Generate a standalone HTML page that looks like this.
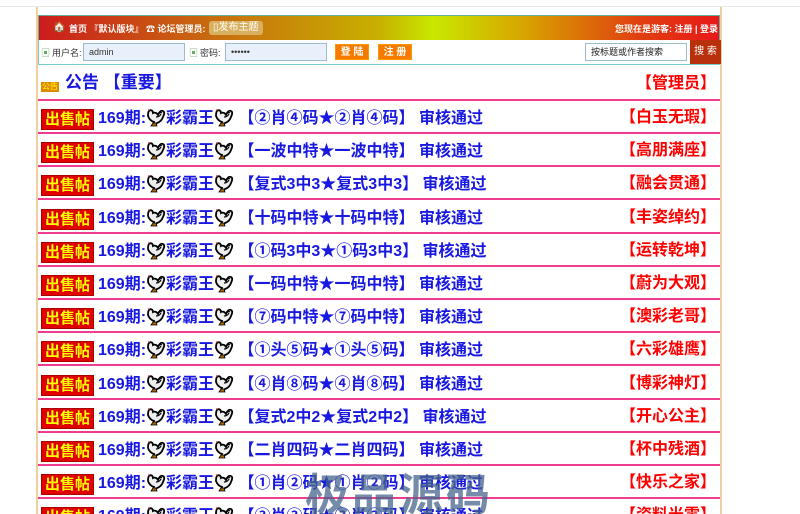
<!DOCTYPE html>
<html style="width:800px;height:514px;overflow:hidden"><head><meta charset="utf-8"><style>
*{margin:0;padding:0;box-sizing:border-box}
body{width:800px;height:514px;overflow:hidden;background:#fff;font-family:"Liberation Sans","Noto Sans CJK SC",sans-serif;position:relative}
.topline{position:absolute;left:0;top:6px;width:800px;height:1px;background:#e8e8e8}
.wrap{position:absolute;left:36px;top:7px;width:686px;height:507px;border-left:2px solid #f2cfa0;border-right:2px solid #f2cfa0}
.bar{position:absolute;left:38px;top:15px;width:682px;height:25px;background:linear-gradient(90deg,#cc1c1c 0%,#c86a10 25%,#c8b000 50%,#c8e800 58%,#d8a000 72%,#e04010 88%,#e81818 100%);border:1px solid #6a9;border-bottom:none;color:#fff;font-size:9px;font-weight:bold;line-height:12px}
.bar span{position:absolute;white-space:nowrap}
.login{position:absolute;left:38px;top:40px;width:682px;height:25px;border:1px solid #7cc;border-top:none;font-size:9px;color:#333;line-height:12px}
.login span{position:absolute;white-space:nowrap}
.inp{position:absolute;height:18px;border:1px solid #9bc;background:#e8f0fc;font-size:9px;padding:0 5px;top:3px;line-height:16px}
.btn{position:absolute;top:4px;height:16px;background:#f77a00;color:#fff;font-size:10px;font-weight:bold;text-align:center;line-height:15px;border:1px solid #f90}
.row{position:absolute;left:38px;width:682px;height:33px;border-bottom:2px solid #f03c90}
.badge{position:absolute;left:3px;top:8px;width:53px;height:21px;background:#e00000;border:1px solid #a00;color:#ff0;font-size:15px;font-weight:bold;text-align:center;line-height:20px}
.t{position:absolute;left:60px;top:6px;font-size:16px;font-weight:bold;color:#1818e0;white-space:nowrap;line-height:20px}
.u{position:absolute;right:4px;top:7px;font-size:16px;font-weight:bold;color:#f00;line-height:20px}
.r{display:inline-block;width:20px;height:20px;vertical-align:-4px}
.wm{position:absolute;left:305px;top:466px;font-size:44px;line-height:50px;font-weight:bold;color:rgba(70,100,140,0.75);letter-spacing:3px;font-family:"Noto Sans CJK SC",sans-serif}
</style></head><body>
<div class="topline"></div>
<div class="wrap"></div>
<div class="bar">
<span style="left:14px;top:6px;font-size:10px">🏠</span>
<span style="left:30px;top:7px">首页 『默认版块』 ☎ 论坛管理员:</span>
<span style="left:170px;top:5px;background:#d8b060;color:#fff;padding:1px 4px;border-radius:3px;font-weight:normal;font-size:10px">▯发布主题</span>
<span style="right:1px;top:7px">您现在是游客: 注册 | 登录</span>
</div>
<div class="login">
<span style="left:2px;top:7px;color:#6a6">▣</span><span style="left:13px;top:7px">用户名:</span>
<div class="inp" style="left:44px;width:102px">admin</div>
<span style="left:150px;top:7px;color:#6a6">▣</span><span style="left:161px;top:7px">密码:</span>
<div class="inp" style="left:186px;width:102px">••••••</div>
<div class="btn" style="left:296px;width:34px">登 陆</div>
<div class="btn" style="left:339px;width:34px">注 册</div>
<div class="inp" style="left:546px;width:102px;background:#fff;color:#222">按标题或作者搜索</div>
<div style="position:absolute;left:651px;top:0;width:31px;height:24px;background:#b8300c;color:#fff;font-size:10px;text-align:center;line-height:24px">搜 索</div>
</div>
<div class="row" style="top:66px;height:35px">
<span style="position:absolute;left:3px;top:16px;background:#e08a00;color:#ff0;font-size:8px;line-height:10px;padding:0 1px">公告</span>
<span class="t" style="left:27px;top:7px;font-size:17px">公告 【重要】</span>
<span class="u" style="top:8px">【管理员】</span>
</div>
<svg width="0" height="0" style="position:absolute"><defs><symbol id="ck" viewBox="0 0 20 20"><path d="M3 4c2-2 4 0 4 2 2-1 4 0 5 2 1-3 3-5 5-4 2 1 1 4 0 6-1 3-3 5-6 6l-2 2H7l1-3c-3-1-5-3-6-6 0-2 0-4 1-5z" fill="#eee" stroke="#000" stroke-width="1.8"/><path d="M12 8c1-2 3-3 4-2M10 10c2 0 4-1 5-3" fill="none" stroke="#000" stroke-width="1.2"/><path d="M3 4l-1-2 2 1z" fill="#d00"/><path d="M7 16l-2 3h6l-1-3z" fill="#a60" stroke="#000" stroke-width="0.8"/></symbol></defs></svg>
<div id="rows"></div>
<script>
var d=[["②肖④码★②肖④码","白玉无瑕"],["一波中特★一波中特","高朋满座"],["复式3中3★复式3中3","融会贯通"],["十码中特★十码中特","丰姿绰约"],["①码3中3★①码3中3","运转乾坤"],["一码中特★一码中特","蔚为大观"],["⑦码中特★⑦码中特","澳彩老哥"],["①头⑤码★①头⑤码","六彩雄鹰"],["④肖⑧码★④肖⑧码","博彩神灯"],["复式2中2★复式2中2","开心公主"],["二肖四码★二肖四码","杯中残酒"],["①肖②码★①肖②码","快乐之家"],["③肖③码★③肖③码","资料光零"]];
var h="",ck='<svg class="r"><use href="#ck"/></svg>';
d.forEach(function(x,i){h+='<div class="row" style="top:'+(101+i*33.2)+'px"><div class="badge">出售帖</div><span class="t">169期:'+ck+'彩霸王'+ck+' 【'+x[0]+'】 审核通过</span><span class="u">【'+x[1]+'】</span></div>'});
document.getElementById("rows").innerHTML=h;
</script>
<div class="wm">极品源码</div>
</body></html>
